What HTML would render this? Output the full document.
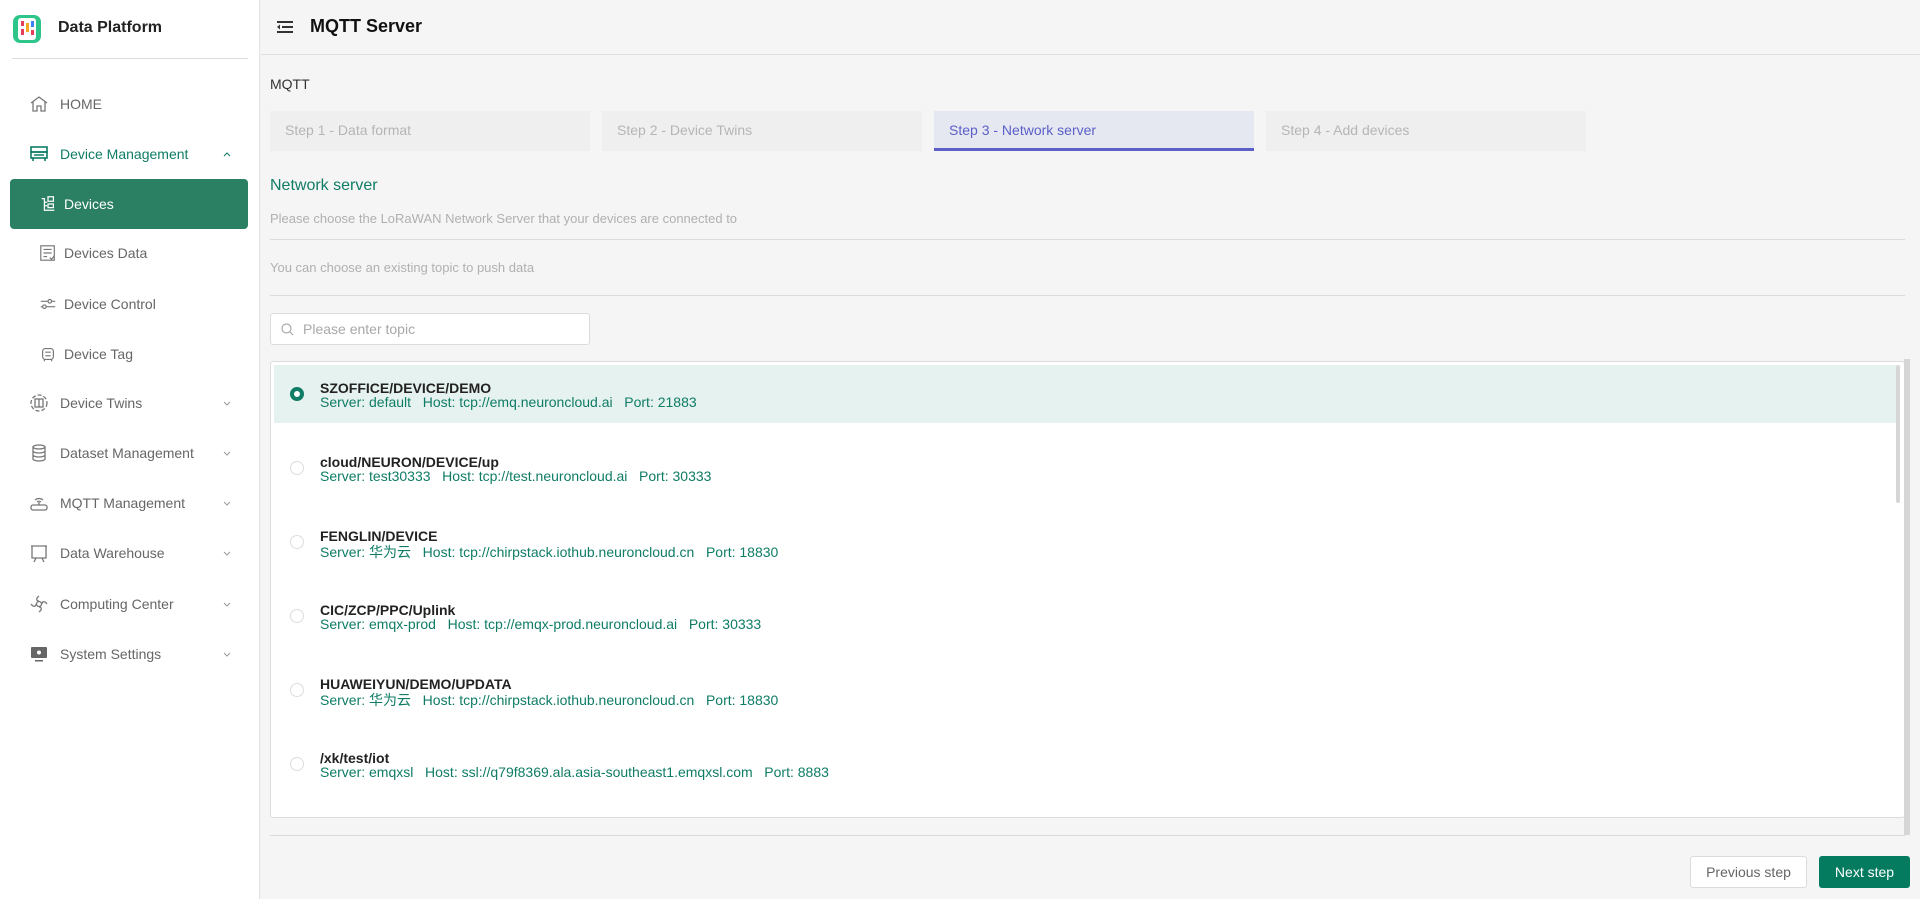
<!DOCTYPE html>
<html><head><meta charset="utf-8"><style>
*{box-sizing:border-box;margin:0;padding:0}
body{width:1920px;height:899px;overflow:hidden;background:#f5f5f5;font-family:"Liberation Sans","Noto Sans CJK SC",sans-serif;position:relative}
.abs{position:absolute}
#side{left:0;top:0;width:260px;height:899px;background:#fff;border-right:1px solid #e2e2e2}
.mi{position:absolute;left:0;width:260px;height:40px;display:flex;align-items:center;font-size:14px;color:#666}
.mi svg{position:absolute;left:29px;width:20px;height:20px}
.mi .t{position:absolute;left:60px}
.mi .ch{position:absolute;left:222px;width:10px;height:10px}
.sub svg{left:39px;width:18px;height:18px}
.sub .t{left:64px}
.step{position:absolute;top:111px;height:40px;width:320px;background:#efefef;color:#b5b5b5;font-size:14px;padding:11px 0 0 15px}
.row{position:absolute;left:274px;width:1622px;height:58px}
.row .r{position:absolute;left:16px;top:16px;width:14px;height:14px;border:1px solid #dcdcdc;border-radius:50%;background:#fff}
.row .a{position:absolute;left:46px;top:14px;font-size:14px;font-weight:bold;color:#222}
.row .b{position:absolute;left:46px;top:28px;font-size:14px;color:#0f7c66;white-space:pre}
</style></head><body>
<div id="side" class="abs">
  <svg class="abs" style="left:12px;top:14px" width="30" height="30" viewBox="0 0 30 30"><rect x="1" y="1" width="28" height="28" rx="7" fill="#2ec58a"/><rect x="6" y="4" width="18" height="22" rx="3" fill="#fff"/><rect x="9" y="7" width="3" height="5" fill="#e53e5a"/><rect x="14" y="9" width="3" height="9" fill="#f5a623"/><rect x="19" y="7" width="3" height="6" fill="#3b82f6"/><rect x="9" y="15" width="3" height="6" fill="#e53e5a"/><rect x="19" y="16" width="3" height="5" fill="#e53e5a"/></svg>
  <div class="abs" style="left:58px;top:19px;font-size:16px;font-weight:bold;color:#222">Data Platform</div>
  <div class="abs" style="left:12px;top:58px;width:236px;height:1px;background:#dcdcdc"></div>

  <div class="mi" style="top:84px"><svg viewBox="0 0 20 20" fill="none" stroke="#777" stroke-width="1.3"><path d="M2 9 10 3l8 6M4 8v9h4v-5h4v5h4V8"/></svg><span class="t">HOME</span></div>
  <div class="mi" style="top:134px;color:#0f7c66"><svg viewBox="0 0 20 20" fill="none" stroke="#0f7c66" stroke-width="1.6"><rect x="2" y="3" width="16" height="5"/><rect x="2" y="8" width="16" height="6"/><path d="M4 14v3M16 14v3M5 11h10"/></svg><span class="t">Device Management</span><svg class="ch" viewBox="0 0 10 10" fill="none" stroke="#0f7c66"><path d="M2 7l3-3 3 3"/></svg></div>
  <div class="abs" style="left:10px;top:179px;width:238px;height:50px;background:#2b7f62;border-radius:4px"></div>
  <div class="mi sub" style="top:184px;color:#fff"><svg viewBox="0 0 20 20" fill="none" stroke="#fff" stroke-width="1.4"><path d="M3 4h3v13h11M6 8h3M6 12h3M10 2h6v5h-6zM10 10h6v4h-6z"/></svg><span class="t">Devices</span></div>
  <div class="mi sub" style="top:233px"><svg viewBox="0 0 20 20" fill="none" stroke="#777" stroke-width="1.3"><rect x="2" y="2" width="15" height="16"/><path d="M5 6h9M5 10h9M5 14h4M12 15l2 2 3-4"/></svg><span class="t">Devices Data</span></div>
  <div class="mi sub" style="top:284px"><svg viewBox="0 0 20 20" fill="none" stroke="#777" stroke-width="1.3"><path d="M2 7h16M2 13h16"/><circle cx="12" cy="7" r="2" fill="#fff"/><circle cx="6" cy="13" r="2" fill="#fff"/></svg><span class="t">Device Control</span></div>
  <div class="mi sub" style="top:334px"><svg viewBox="0 0 20 20" fill="none" stroke="#777" stroke-width="1.3"><rect x="4" y="4" width="12" height="12" rx="3"/><path d="M7 8h6M7 12h6M6 16v2M14 16v2"/></svg><span class="t">Device Tag</span></div>
  <div class="mi" style="top:383px"><svg viewBox="0 0 20 20" fill="none" stroke="#777" stroke-width="1.3"><circle cx="10" cy="10" r="8" stroke-dasharray="4 2"/><rect x="6" y="6" width="8" height="8"/><path d="M10 6v8"/></svg><span class="t">Device Twins</span><svg class="ch" viewBox="0 0 10 10" fill="none" stroke="#999"><path d="M2 4l3 3 3-3"/></svg></div>
  <div class="mi" style="top:433px"><svg viewBox="0 0 20 20" fill="none" stroke="#777" stroke-width="1.3"><ellipse cx="10" cy="4" rx="6" ry="2"/><path d="M4 4v12c0 1 3 2 6 2s6-1 6-2V4M4 8c0 1 3 2 6 2s6-1 6-2M4 12c0 1 3 2 6 2s6-1 6-2"/></svg><span class="t">Dataset Management</span><svg class="ch" viewBox="0 0 10 10" fill="none" stroke="#999"><path d="M2 4l3 3 3-3"/></svg></div>
  <div class="mi" style="top:483px"><svg viewBox="0 0 20 20" fill="none" stroke="#777" stroke-width="1.3"><rect x="2" y="12" width="16" height="5" rx="2"/><path d="M6 7a6 6 0 0 1 8 0M8 9a3 3 0 0 1 4 0M10 9v3"/></svg><span class="t">MQTT Management</span><svg class="ch" viewBox="0 0 10 10" fill="none" stroke="#999"><path d="M2 4l3 3 3-3"/></svg></div>
  <div class="mi" style="top:533px"><svg viewBox="0 0 20 20" fill="none" stroke="#777" stroke-width="1.3"><path d="M2 3h16M3 3v12h14V3M7 15l-2 4M13 15l2 4"/></svg><span class="t">Data Warehouse</span><svg class="ch" viewBox="0 0 10 10" fill="none" stroke="#999"><path d="M2 4l3 3 3-3"/></svg></div>
  <div class="mi" style="top:584px"><svg viewBox="0 0 20 20" fill="none" stroke="#777" stroke-width="1.3"><circle cx="10" cy="10" r="2.5"/><path d="M10 2c-3 2-3 5 0 5M18 10c-2-3-5-3-5 0M10 18c3-2 3-5 0-5M2 10c2 3 5 3 5 0"/></svg><span class="t">Computing Center</span><svg class="ch" viewBox="0 0 10 10" fill="none" stroke="#999"><path d="M2 4l3 3 3-3"/></svg></div>
  <div class="mi" style="top:634px"><svg viewBox="0 0 20 20"><rect x="2" y="3" width="16" height="11" rx="1" fill="#666"/><circle cx="10" cy="8.5" r="2" fill="#fff"/><rect x="6" y="16" width="8" height="1.5" fill="#666"/></svg><span class="t">System Settings</span><svg class="ch" viewBox="0 0 10 10" fill="none" stroke="#999"><path d="M2 4l3 3 3-3"/></svg></div>
</div>

<div class="abs" style="left:261px;top:54px;width:1659px;height:1px;background:#e0e0e0"></div>
<svg class="abs" style="left:277px;top:20px" width="16" height="14" viewBox="0 0 16 14" fill="#333"><rect x="0" y="1" width="16" height="2"/><rect x="5" y="6" width="11" height="2"/><rect x="0" y="11" width="16" height="2"/><path d="M0 7l3-2.5v5z"/></svg>
<div class="abs" style="left:310px;top:16px;font-size:18px;font-weight:bold;color:#111">MQTT Server</div>

<div class="abs" style="left:270px;top:76px;font-size:14px;color:#333">MQTT</div>
<div class="step" style="left:270px">Step 1 - Data format</div>
<div class="step" style="left:602px">Step 2 - Device Twins</div>
<div class="step" style="left:934px;background:#e5e8f1;color:#5b5fc7;border-bottom:3px solid #5b5fc7">Step 3 - Network server</div>
<div class="step" style="left:1266px">Step 4 - Add devices</div>

<div class="abs" style="left:270px;top:177px;font-size:16px;color:#0f7c66">Network server</div>
<div class="abs" style="left:270px;top:211px;font-size:13px;color:#b0b0b0">Please choose the LoRaWAN Network Server that your devices are connected to</div>
<div class="abs" style="left:270px;top:239px;width:1635px;height:1px;background:#dadada"></div>
<div class="abs" style="left:270px;top:260px;font-size:13px;color:#b0b0b0">You can choose an existing topic to push data</div>
<div class="abs" style="left:270px;top:295px;width:1635px;height:1px;background:#dadada"></div>

<div class="abs" style="left:270px;top:313px;width:320px;height:32px;background:#fff;border:1px solid #dcdcdc;border-radius:3px"></div>
<svg class="abs" style="left:281px;top:323px" width="13" height="13" viewBox="0 0 13 13" fill="none" stroke="#aaa" stroke-width="1.2"><circle cx="5.5" cy="5.5" r="4.5"/><path d="M9 9l3 3"/></svg>
<div class="abs" style="left:303px;top:321px;font-size:14px;color:#a8a8a8">Please enter topic</div>

<div class="abs" style="left:270px;top:361px;width:1635px;height:457px;background:#fff;border:1px solid #dcdcdc;border-radius:3px;overflow:hidden">
</div>
<div class="abs" style="left:274px;top:365px;width:1622px;height:58px;background:#e6f2ef"></div>
<div class="row" style="top:365px"><div class="r" style="border:4px solid #0f7c66;width:14px;height:14px;left:16px;top:22px"></div><div class="a" style="top:15px">SZOFFICE/DEVICE/DEMO</div><div class="b" style="top:29px">Server: default   Host: tcp://emq.neuroncloud.ai   Port: 21883</div></div>
<div class="row" style="top:439px"><div class="r" style="top:22px"></div><div class="a" style="top:15px">cloud/NEURON/DEVICE/up</div><div class="b" style="top:29px">Server: test30333   Host: tcp://test.neuroncloud.ai   Port: 30333</div></div>
<div class="row" style="top:513px"><div class="r" style="top:22px"></div><div class="a" style="top:15px">FENGLIN/DEVICE</div><div class="b" style="top:29px">Server: 华为云   Host: tcp://chirpstack.iothub.neuroncloud.cn   Port: 18830</div></div>
<div class="row" style="top:587px"><div class="r" style="top:22px"></div><div class="a" style="top:15px">CIC/ZCP/PPC/Uplink</div><div class="b" style="top:29px">Server: emqx-prod   Host: tcp://emqx-prod.neuroncloud.ai   Port: 30333</div></div>
<div class="row" style="top:661px"><div class="r" style="top:22px"></div><div class="a" style="top:15px">HUAWEIYUN/DEMO/UPDATA</div><div class="b" style="top:29px">Server: 华为云   Host: tcp://chirpstack.iothub.neuroncloud.cn   Port: 18830</div></div>
<div class="row" style="top:735px"><div class="r" style="top:22px"></div><div class="a" style="top:15px">/xk/test/iot</div><div class="b" style="top:29px">Server: emqxsl   Host: ssl://q79f8369.ala.asia-southeast1.emqxsl.com   Port: 8883</div></div>
<div class="abs" style="left:1896px;top:365px;width:4px;height:138px;background:#d6d6d6;border-radius:2px"></div>
<div class="abs" style="left:1904px;top:359px;width:6px;height:476px;background:#d6d6d6"></div>
<div class="abs" style="left:270px;top:835px;width:1635px;height:1px;background:#dadada"></div>

<div class="abs" style="left:1690px;top:856px;width:117px;height:32px;background:#fff;border:1px solid #dcdcdc;border-radius:3px;font-size:14px;color:#666;text-align:center;line-height:30px">Previous step</div>
<div class="abs" style="left:1819px;top:856px;width:91px;height:32px;background:#047b5f;border-radius:3px;font-size:14px;color:#fff;text-align:center;line-height:32px">Next step</div>
</body></html>
